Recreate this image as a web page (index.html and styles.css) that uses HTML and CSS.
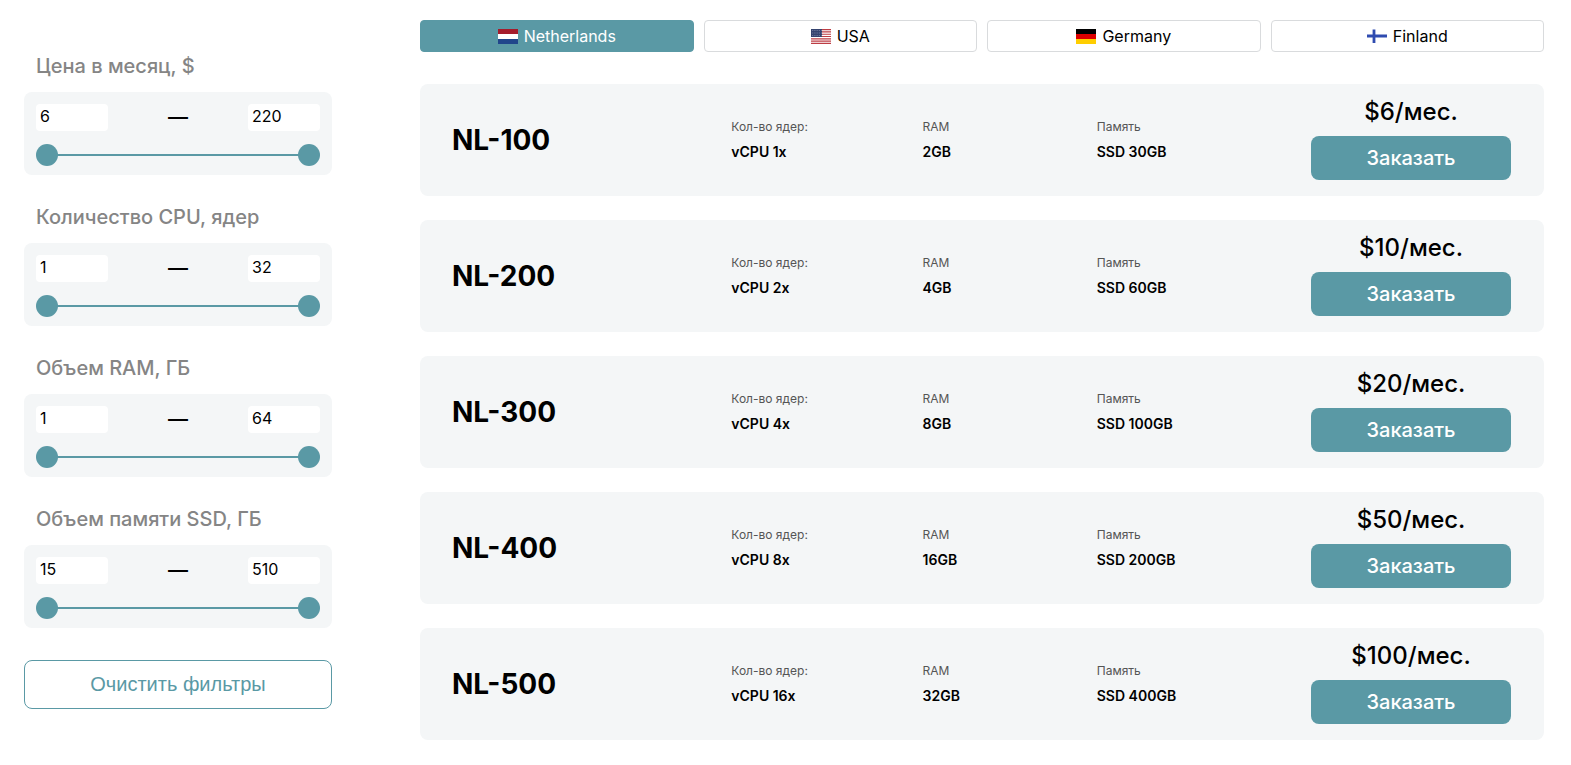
FILE: index.html
```html
<!DOCTYPE html>
<html lang="ru">

<head>
    <meta charset="UTF-8">
    <meta name="viewport" content="width=device-width, initial-scale=1.0">
    <title>Тарифы VPS</title>
    <link rel="stylesheet" href="styles.css">
</head>

<body>
    <div class="page">
        <form class="filters">
            <fieldset class="filter">
                <legend class="filter-title">Цена в месяц, $</legend>
                <div class="filter-box">
                    <div class="filter-values">
                        <input type="text" inputmode="numeric" value="6" aria-label="Цена от">
                        <span class="dash">—</span>
                        <input type="text" inputmode="numeric" value="220" aria-label="Цена до">
                    </div>
                    <div class="slider">
                        <input type="range" min="6" max="220" value="6" aria-label="Цена от">
                        <input type="range" min="6" max="220" value="220" aria-label="Цена до">
                    </div>
                </div>
            </fieldset>
            <fieldset class="filter">
                <legend class="filter-title">Количество CPU, ядер</legend>
                <div class="filter-box">
                    <div class="filter-values">
                        <input type="text" inputmode="numeric" value="1" aria-label="Ядер от">
                        <span class="dash">—</span>
                        <input type="text" inputmode="numeric" value="32" aria-label="Ядер до">
                    </div>
                    <div class="slider">
                        <input type="range" min="1" max="32" value="1" aria-label="Ядер от">
                        <input type="range" min="1" max="32" value="32" aria-label="Ядер до">
                    </div>
                </div>
            </fieldset>
            <fieldset class="filter">
                <legend class="filter-title">Объем RAM, ГБ</legend>
                <div class="filter-box">
                    <div class="filter-values">
                        <input type="text" inputmode="numeric" value="1" aria-label="RAM от">
                        <span class="dash">—</span>
                        <input type="text" inputmode="numeric" value="64" aria-label="RAM до">
                    </div>
                    <div class="slider">
                        <input type="range" min="1" max="64" value="1" aria-label="RAM от">
                        <input type="range" min="1" max="64" value="64" aria-label="RAM до">
                    </div>
                </div>
            </fieldset>
            <fieldset class="filter">
                <legend class="filter-title">Объем памяти SSD, ГБ</legend>
                <div class="filter-box">
                    <div class="filter-values">
                        <input type="text" inputmode="numeric" value="15" aria-label="SSD от">
                        <span class="dash">—</span>
                        <input type="text" inputmode="numeric" value="510" aria-label="SSD до">
                    </div>
                    <div class="slider">
                        <input type="range" min="15" max="510" value="15" aria-label="SSD от">
                        <input type="range" min="15" max="510" value="510" aria-label="SSD до">
                    </div>
                </div>
            </fieldset>
            <button type="reset" class="button-clear">Очистить фильтры</button>
        </form>

        <main class="content">
            <div class="countries">
                <button type="button" class="country country-active">
                    <svg class="flag" viewBox="0 0 20 15" aria-hidden="true">
                        <rect width="20" height="15" fill="#fff" />
                        <rect width="20" height="5" fill="#a51c2c" />
                        <rect y="10" width="20" height="5" fill="#21468b" />
                    </svg>
                    Netherlands
                </button>
                <button type="button" class="country">
                    <svg class="flag" viewBox="0 0 20 15" aria-hidden="true">
                        <rect width="20" height="15" fill="#fff" />
                        <path d="M0 .6h20M0 2.9h20M0 5.2h20M0 7.5h20M0 9.8h20M0 12.1h20M0 14.4h20" stroke="#bd3d44" stroke-width="1.15" />
                        <rect width="11" height="8" fill="#35436f" />
                        <path d="M1 1.5h10M1 4h10M1 6.5h10" stroke="#8d96b5" stroke-width=".8" stroke-dasharray=".8 1" />
                    </svg>
                    USA
                </button>
                <button type="button" class="country">
                    <svg class="flag" viewBox="0 0 20 15" aria-hidden="true">
                        <rect width="20" height="5" fill="#000" />
                        <rect y="5" width="20" height="5" fill="#d00" />
                        <rect y="10" width="20" height="5" fill="#ffce00" />
                    </svg>
                    Germany
                </button>
                <button type="button" class="country">
                    <svg class="flag" viewBox="0 0 20 15" aria-hidden="true">
                        <rect width="20" height="15" fill="#fff" />
                        <path d="M0 7h20M7 .5v13.5" stroke="#2f4bb0" stroke-width="2.8" />
                    </svg>
                    Finland
                </button>
            </div>

            <div class="plans">
                <article class="plan">
                    <h2 class="plan-name">NL-100</h2>
                    <div class="spec"><span>Кол-во ядер:</span><b>vCPU 1x</b></div>
                    <div class="spec"><span>RAM</span><b>2GB</b></div>
                    <div class="spec"><span>Память</span><b>SSD 30GB</b></div>
                    <div class="order">
                        <p class="price">$6/мес.</p>
                        <button type="button" class="button-order">Заказать</button>
                    </div>
                </article>
                <article class="plan">
                    <h2 class="plan-name">NL-200</h2>
                    <div class="spec"><span>Кол-во ядер:</span><b>vCPU 2x</b></div>
                    <div class="spec"><span>RAM</span><b>4GB</b></div>
                    <div class="spec"><span>Память</span><b>SSD 60GB</b></div>
                    <div class="order">
                        <p class="price">$10/мес.</p>
                        <button type="button" class="button-order">Заказать</button>
                    </div>
                </article>
                <article class="plan">
                    <h2 class="plan-name">NL-300</h2>
                    <div class="spec"><span>Кол-во ядер:</span><b>vCPU 4x</b></div>
                    <div class="spec"><span>RAM</span><b>8GB</b></div>
                    <div class="spec"><span>Память</span><b>SSD 100GB</b></div>
                    <div class="order">
                        <p class="price">$20/мес.</p>
                        <button type="button" class="button-order">Заказать</button>
                    </div>
                </article>
                <article class="plan">
                    <h2 class="plan-name">NL-400</h2>
                    <div class="spec"><span>Кол-во ядер:</span><b>vCPU 8x</b></div>
                    <div class="spec"><span>RAM</span><b>16GB</b></div>
                    <div class="spec"><span>Память</span><b>SSD 200GB</b></div>
                    <div class="order">
                        <p class="price">$50/мес.</p>
                        <button type="button" class="button-order">Заказать</button>
                    </div>
                </article>
                <article class="plan">
                    <h2 class="plan-name">NL-500</h2>
                    <div class="spec"><span>Кол-во ядер:</span><b>vCPU 16x</b></div>
                    <div class="spec"><span>RAM</span><b>32GB</b></div>
                    <div class="spec"><span>Память</span><b>SSD 400GB</b></div>
                    <div class="order">
                        <p class="price">$100/мес.</p>
                        <button type="button" class="button-order">Заказать</button>
                    </div>
                </article>
            </div>
        </main>
    </div>
</body>

</html>
```
FILE: styles.css
```css
* {
    box-sizing: border-box;
}

body {
    margin: 0;
    background-color: #fff;
    color: #000;
    font-family: Inter, "Liberation Sans", sans-serif;
    font-size: 16px;
}

button,
input {
    font-family: inherit;
}

button {
    cursor: pointer;
}

.page {
    display: flex;
    align-items: flex-start;
    gap: 88px;
    padding: 20px 27px 24px 24px;
}

/* Filters */
.filters {
    flex: 0 0 308px;
    padding-top: 32px;
}

.filter {
    margin: 0 0 28px;
    padding: 0;
    border: 0;
    min-width: 0;
}

.filter-title {
    padding: 0 12px;
    height: 40px;
    color: #858585;
    font-size: 20px;
    font-weight: 500;
    line-height: 28px;
}

.filter-box {
    padding: 12px 12px 9px;
    border-radius: 8px;
    background-color: #f4f6f7;
}

.filter-values {
    display: flex;
    justify-content: space-between;
    align-items: flex-start;
    height: 27px;
    margin-bottom: 13px;
}

.filter-values input {
    width: 72px;
    height: 27px;
    padding: 0 4px 4px;
    border: 0;
    border-radius: 4px;
    background-color: #fff;
    color: #000;
    font-size: 16px;
}

.dash {
    font-size: 20px;
    font-weight: 500;
    line-height: 26px;
}

.slider {
    position: relative;
    height: 22px;
    background: linear-gradient(#5a99a5, #5a99a5) center / calc(100% - 22px) 2px no-repeat;
}

/* two ranges share one track, only the thumbs take the pointer */
.slider input {
    position: absolute;
    top: 0;
    left: 0;
    width: 100%;
    height: 22px;
    margin: 0;
    background: none;
    -webkit-appearance: none;
    appearance: none;
    pointer-events: none;
}

.slider input::-webkit-slider-thumb {
    -webkit-appearance: none;
    width: 22px;
    height: 22px;
    border-radius: 50%;
    background-color: #5a99a5;
    pointer-events: auto;
    cursor: pointer;
}

.slider input::-moz-range-thumb {
    width: 22px;
    height: 22px;
    border: 0;
    border-radius: 50%;
    background-color: #5a99a5;
    pointer-events: auto;
    cursor: pointer;
}

.button-clear {
    display: block;
    width: 100%;
    height: 49px;
    margin-top: 32px;
    border: 1px solid #5a99a5;
    border-radius: 8px;
    background-color: #fff;
    color: #5a99a5;
    font-family: Arial, "Liberation Sans", sans-serif;
    font-size: 20px;
}

/* Countries */
.content {
    flex: 1;
    min-width: 0;
}

.countries {
    display: grid;
    grid-template-columns: repeat(4, 1fr);
    gap: 10px;
    margin-bottom: 32px;
}

.country {
    display: flex;
    justify-content: center;
    align-items: center;
    gap: 6px;
    height: 32px;
    padding: 0;
    border: 1px solid #d9dbdd;
    border-radius: 4px;
    background-color: #fff;
    color: #000;
    font-size: 16px;
}

.country-active {
    border-color: #5a99a5;
    background-color: #5a99a5;
    color: #fff;
}

.flag {
    width: 20px;
    height: 15px;
}

/* Plans */
.plans {
    display: grid;
    gap: 24px;
}

.plan {
    display: grid;
    grid-template-columns: 279fr 191fr 174fr 214fr 200px;
    align-items: center;
    height: 112px;
    padding: 0 33px 0 32px;
    border-radius: 8px;
    background-color: #f4f6f7;
}

.plan-name {
    margin: 0;
    font-size: 28px;
    font-weight: 700;
}

.spec {
    display: grid;
    gap: 8px;
}

.spec span {
    color: #555;
    font-size: 12px;
    line-height: 16px;
}

.spec b {
    font-size: 14px;
    font-weight: 600;
    line-height: 18px;
}

.order {
    padding-bottom: 4px;
}

.price {
    margin: 0 0 8px;
    font-size: 24px;
    font-weight: 500;
    line-height: 32px;
    text-align: center;
}

.button-order {
    display: block;
    width: 100%;
    height: 44px;
    border: 0;
    border-radius: 8px;
    background-color: #5a99a5;
    color: #fff;
    font-size: 20px;
    font-weight: 500;
}

@media screen and (max-width: 1100px) {
    .page {
        gap: 32px;
    }

    .plan {
        grid-template-columns: 2fr 2fr 1fr 2fr 160px;
        padding: 0 16px;
    }
}
```
